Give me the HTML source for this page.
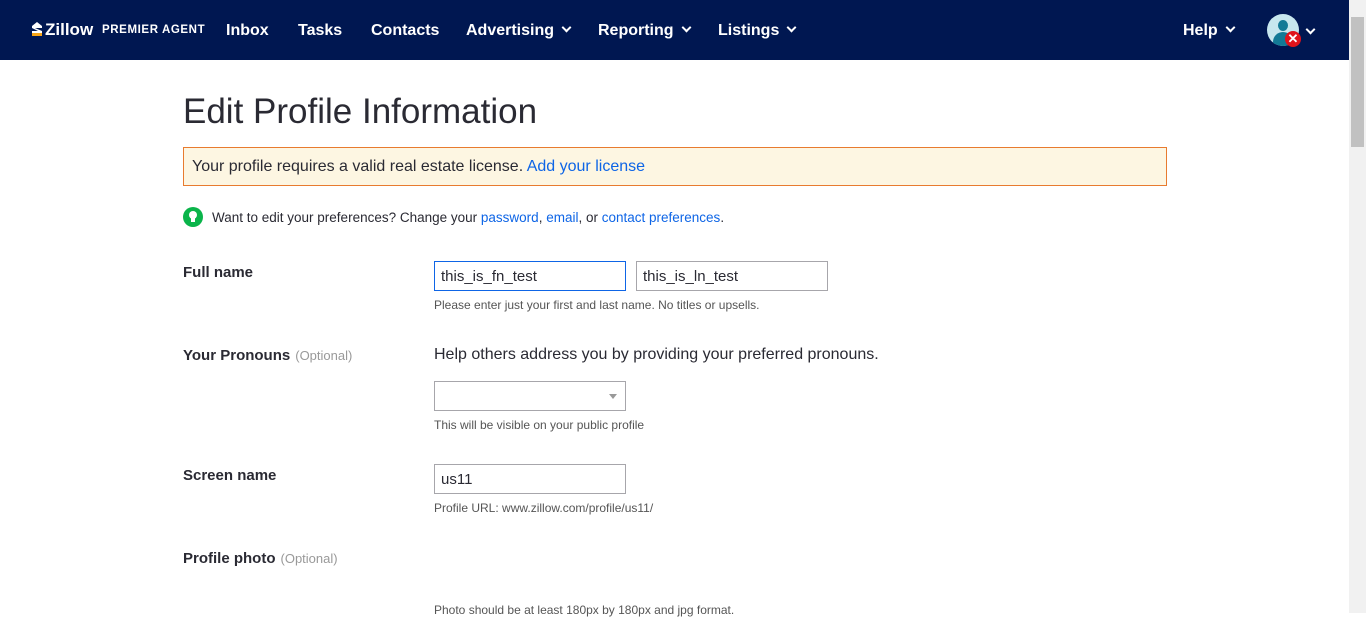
<!DOCTYPE html>
<html><head><meta charset="utf-8"><style>
*{box-sizing:border-box;margin:0;padding:0}
body{width:1366px;height:613px;overflow:hidden;background:#fff;font-family:"Liberation Sans",sans-serif;color:#2a2a33;position:relative}
.nav{position:absolute;left:0;top:0;width:1349px;height:60px;background:#001751;color:#fff}
.nav .it{position:absolute;top:22px;font-size:16px;font-weight:bold}
.chev{display:inline-block;width:7px;height:7px;border-right:2px solid #fff;border-bottom:2px solid #fff;transform:rotate(45deg);margin-left:9px;position:relative;top:-4px}
.sb{position:absolute;right:0;top:0;width:17px;height:613px;background:#f1f1f1}
.sb .th{position:absolute;left:2px;top:17px;width:13px;height:130px;background:#c1c1c1}
h1{position:absolute;left:183px;top:92px;font-size:35px;font-weight:normal;color:#2a2a33}
.alert{position:absolute;left:183px;top:147px;width:984px;height:39px;background:#fdf6e2;border:1px solid #e87b2f;font-size:16px;padding:10px 8px}
a{color:#0e65e6;text-decoration:none}
.tip{position:absolute;font-size:13.5px}
.lbl{position:absolute;left:183px;font-size:15px;font-weight:bold}
.opt{font-weight:normal;font-size:13px;color:#999;margin-left:5px}
.inp{position:absolute;height:30px;border:1px solid #a7a6ab;font-size:15px;padding:6px 6px}
.hint{position:absolute;left:434px;font-size:12px;color:#555}
</style></head><body>
<div class="nav">
 <svg style="position:absolute;left:31px;top:20px" width="12" height="16" viewBox="0 0 12 16"><path d="M1 6 L6 2 L11 6 L11 8 L4 8 L11 11 L11 13 L1 13 L1 11 L7 11 L1 8Z" fill="#fff"/><rect x="1" y="13" width="10" height="3" fill="#f7a416"/></svg>
 <span class="it" style="left:45px;top:20px;font-size:17px">Zillow</span>
 <span class="it" style="left:102px;top:24px;font-size:11.5px;letter-spacing:.6px">PREMIER AGENT</span>
 <span class="it" style="left:226px">Inbox</span>
 <span class="it" style="left:298px">Tasks</span>
 <span class="it" style="left:371px">Contacts</span>
 <span class="it" style="left:466px">Advertising<span class="chev"></span></span>
 <span class="it" style="left:598px">Reporting<span class="chev"></span></span>
 <span class="it" style="left:718px">Listings<span class="chev"></span></span>
 <span class="it" style="left:1183px">Help<span class="chev"></span></span>
 <div style="position:absolute;left:1267px;top:14px;width:32px;height:32px;border-radius:50%;background:#c7e7ee;overflow:hidden"><div style="position:absolute;left:11px;top:6px;width:10px;height:11px;border-radius:50%;background:#137a96"></div><div style="position:absolute;left:6px;top:18px;width:20px;height:14px;border-radius:10px 10px 0 0;background:#137a96"></div></div>
 <div style="position:absolute;left:1285px;top:31px;width:16px;height:16px;border-radius:50%;background:#e0131b;color:#fff;font-size:13px;font-weight:bold;text-align:center;line-height:16px">✕</div>
 <span class="chev" style="position:absolute;left:1298px;top:26px"></span>
</div>
<div class="sb"><div class="th"></div></div>
<h1>Edit Profile Information</h1>
<div class="alert">Your profile requires a valid real estate license. <a>Add your license</a></div>
<div style="position:absolute;left:183px;top:207px;width:20px;height:20px;border-radius:50%;background:#0ab44a"><div style="position:absolute;left:6px;top:4px;width:8px;height:8px;border-radius:50%;background:#fff"></div><div style="position:absolute;left:8px;top:10px;width:4px;height:5px;background:#fff"></div></div>
<div class="tip" style="left:212px;top:210px">Want to edit your preferences? Change your <a>password</a>, <a>email</a>, or <a>contact preferences</a>.</div>
<div class="lbl" style="top:264px">Full name</div>
<div class="inp" style="left:434px;top:261px;width:192px;border:1px solid #0e65e6">this_is_fn_test</div>
<div class="inp" style="left:636px;top:261px;width:192px">this_is_ln_test</div>
<div class="hint" style="top:298px">Please enter just your first and last name. No titles or upsells.</div>
<div class="lbl" style="top:347px">Your Pronouns<span class="opt">(Optional)</span></div>
<div style="position:absolute;left:434px;top:346px;font-size:16px;color:#2a2a33">Help others address you by providing your preferred pronouns.</div>
<div class="inp" style="left:434px;top:381px;width:192px"><div style="position:absolute;right:8px;top:12px;border:4px solid transparent;border-top:5px solid #999"></div></div>
<div class="hint" style="top:418px">This will be visible on your public profile</div>
<div class="lbl" style="top:467px">Screen name</div>
<div class="inp" style="left:434px;top:464px;width:192px">us11</div>
<div class="hint" style="top:501px">Profile URL: www.zillow.com/profile/us11/</div>
<div class="lbl" style="top:550px">Profile photo<span class="opt">(Optional)</span></div>
<div class="hint" style="top:603px">Photo should be at least 180px by 180px and jpg format.</div>
</body></html>
